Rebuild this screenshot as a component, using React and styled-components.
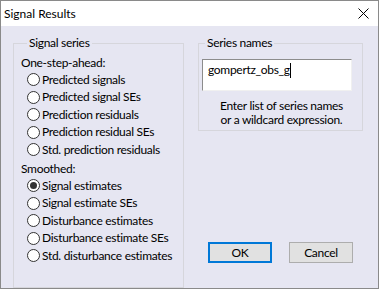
import React from 'react';
import styled, { createGlobalStyle } from 'styled-components';

const Global = createGlobalStyle`
  html, body { margin: 0; padding: 0; background: #ffffff; }
  body {
    font-family: Lato, "Liberation Sans", sans-serif;
    font-size: 12px;
    letter-spacing: -0.3px;
    color: #000;
  }
  * { box-sizing: border-box; }
`;

const Window = styled.div`
  width: 379px;
  height: 289px;
  border: 1px solid #8a8a8a;
  background: #e6e6f2;
  display: flex;
  flex-direction: column;
`;

const TitleBar = styled.div`
  height: 25px;
  flex: none;
  background: #ffffff;
  display: flex;
  align-items: center;
  justify-content: space-between;
  padding-left: 3px;
`;

const Title = styled.span`
  font-size: 12px;
  line-height: 16px;
  letter-spacing: 0;
`;

const CloseButton = styled.div`
  width: 28px;
  height: 25px;
  display: flex;
  align-items: center;
  justify-content: center;
  margin-right: 1px;
`;

const Body = styled.div`
  flex: 1;
  display: flex;
  gap: 14px;
  padding: 9px 0 0 12px;
`;

const Group = styled.fieldset`
  margin: 0;
  border: 1px solid #d6d6dc;
  width: ${p => p.$w}px;
  padding: ${p => p.$pad};
  min-width: 0;
`;

const Legend = styled.legend`
  padding: 0 2px;
  margin-left: 6px;
  line-height: 16px;
  font-size: 12px;
`;

const Caption = styled.div`
  line-height: 16px;
  margin-top: ${p => p.$mt || 0}px;
`;

const RadioRow = styled.div`
  height: 17.5px;
  display: flex;
  align-items: center;
  padding-left: 6px;
  gap: 2px;
`;

const RadioCircle = styled.span`
  width: 13px;
  height: 13px;
  border-radius: 50%;
  border: 1px solid #333333;
  background: #ffffff;
  display: flex;
  align-items: center;
  justify-content: center;
  flex: none;
  &::after {
    content: '';
    display: ${p => (p.$checked ? 'block' : 'none')};
    width: 7px;
    height: 7px;
    border-radius: 50%;
    background: #333333;
  }
`;

const RadioLabel = styled.span`
  line-height: 16px;
  white-space: nowrap;
`;

const RightColumn = styled.div`
  display: flex;
  flex-direction: column;
  padding-bottom: 25px;
`;

const TextBox = styled.div`
  width: 150px;
  height: 32px;
  margin: 8px 0 0 3px;
  background: #ffffff;
  border-top: 1px solid #8c8c8c;
  border-left: 1px solid #8c8c8c;
  border-right: 1px solid #f0f0f0;
  border-bottom: 1px solid #f0f0f0;
  padding: 2px 0 0 5px;
  line-height: 16px;
  display: flex;
  align-items: flex-start;
`;

const Caret = styled.span`
  display: inline-block;
  width: 1px;
  height: 15px;
  background: #000;
  margin-top: 1px;
`;

const Help = styled.div`
  text-align: center;
  line-height: 14px;
  margin: 8px 0 3px 0;
  padding-left: 2px;
`;

const ButtonRow = styled.div`
  margin-top: auto;
  display: flex;
  justify-content: flex-end;
  gap: 17px;
  padding-right: 10px;
`;

const Button = styled.button`
  width: 64px;
  height: 21px;
  padding: 0;
  font-family: inherit;
  font-size: 12px;
  letter-spacing: inherit;
  color: #000;
  background: #e1e1e1;
  border: ${p => (p.$default ? '2px solid #0078d7' : '1px solid #adadad')};
  display: flex;
  align-items: center;
  justify-content: center;
`;

const Radio = ({ label, checked }) => (
  <RadioRow>
    <RadioCircle $checked={checked} />
    <RadioLabel>{label}</RadioLabel>
  </RadioRow>
);

export default function App() {
  return (
    <>
      <Global />
      <Window>
        <TitleBar>
          <Title>Signal Results</Title>
          <CloseButton>
            <svg width="11" height="11" viewBox="0 0 11 11">
              <path d="M0.5 0.5 L10.5 10.5 M10.5 0.5 L0.5 10.5" stroke="#000" strokeWidth="1" fill="none" />
            </svg>
          </CloseButton>
        </TitleBar>
        <Body>
          <Group $w={171} $pad="4px 0 6px 7px">
            <Legend>Signal series</Legend>
            <Caption>One-step-ahead:</Caption>
            <Radio label="Predicted signals" />
            <Radio label="Predicted signal SEs" />
            <Radio label="Prediction residuals" />
            <Radio label="Prediction residual SEs" />
            <Radio label="Std. prediction residuals" />
            <Caption $mt={2.5}>Smoothed:</Caption>
            <Radio label="Signal estimates" checked />
            <Radio label="Signal estimate SEs" />
            <Radio label="Disturbance estimates" />
            <Radio label="Disturbance estimate SEs" />
            <Radio label="Std. disturbance estimates" />
          </Group>
          <RightColumn>
            <Group $w={165} $pad="0">
              <Legend>Series names</Legend>
              <TextBox>
                <span>gompertz_obs_g</span>
                <Caret />
              </TextBox>
              <Help>
                Enter list of series names
                <br />
                or a wildcard expression.
              </Help>
            </Group>
            <ButtonRow>
              <Button $default>OK</Button>
              <Button>Cancel</Button>
            </ButtonRow>
          </RightColumn>
        </Body>
      </Window>
    </>
  );
}
